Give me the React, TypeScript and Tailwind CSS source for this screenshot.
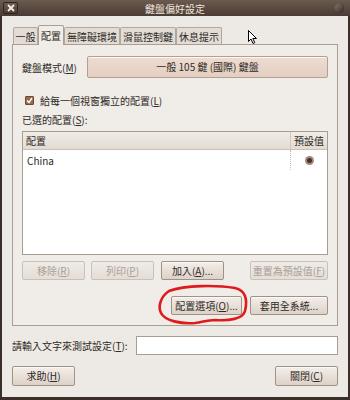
import React from 'react';

const font = { fontFamily: '"Noto Sans CJK TC", "Noto Sans", sans-serif' };

// 一般的 GTK 按鈕（Human 主題）
const Btn = ({
    children,
    disabled,
    className = '',
}: {
    children: React.ReactNode;
    disabled?: boolean;
    className?: string;
}) => (
    <div
        className={`flex items-center justify-center rounded-[2px] border text-[10px] leading-none ${
            disabled
                ? 'border-[#c9c0b6] bg-gradient-to-b from-[#efebe6] to-[#e4ddd6] text-[#a8a098]'
                : 'border-[#9f9286] bg-gradient-to-b from-[#f4eee9] to-[#ddd2c8] text-[#2e2a26] shadow-[inset_0_1px_0_#fbf8f5]'
        } ${className}`}
    >
        {children}
    </div>
);

const U = ({ children }: { children: React.ReactNode }) => <span className="underline">{children}</span>;

const tabs = [
    { label: '一般', w: 'w-[25px]' },
    { label: '配置', w: 'w-[26px]' },
    { label: '無障礙環境', w: 'w-[56px]' },
    { label: '滑鼠控制鍵', w: 'w-[56px]' },
    { label: '休息提示', w: 'w-[46px]' },
];

export default function App() {
    return (
        <div style={font} className="relative flex h-[400px] w-[350px] flex-col overflow-hidden bg-[#3b2f29]">
            {/* 標題列 */}
            <div className="relative flex h-[16px] items-center justify-center bg-gradient-to-b from-[#6b5a4f] to-[#4a3c34] text-[10px] text-[#efe6de]">
                <div className="absolute left-[3px] top-[2px] flex h-[12px] w-[15px] items-center justify-center rounded-[2px] border border-[#2e241f] bg-gradient-to-b from-[#6e5d53] to-[#4c3e36]">
                    <svg width="8" height="8" viewBox="0 0 8 8">
                        <path d="M1 1 L7 7 M7 1 L1 7" stroke="#f3ebe4" strokeWidth="1.8" />
                    </svg>
                </div>
                鍵盤偏好設定
                <div className="absolute right-[6px] top-[3px] h-[10px] w-[10px] rounded-full bg-gradient-to-br from-[#8a7a70] to-[#3a2e28] shadow-[inset_0_0_1px_#2a201b]" />
            </div>

            {/* 視窗內容 */}
            <div className="mx-[2px] mb-[3px] flex flex-1 flex-col bg-[#ede9e4] px-[10px] pt-[10px]">
                {/* 分頁標籤 */}
                <div className="flex h-[18px] items-end pl-[1px]">
                    {tabs.map((t, i) =>
                        i === 1 ? (
                            <div
                                key={t.label}
                                className={`relative z-10 -mb-px flex h-[20px] items-center justify-center rounded-t-[2px] border border-b-0 border-[#aa9e93] bg-[#f0ece8] text-[10px] text-[#2e2a26] ${t.w}`}
                            >
                                {t.label}
                            </div>
                        ) : (
                            <div
                                key={t.label}
                                className={`flex h-[17px] items-center justify-center rounded-t-[2px] border border-b-0 border-[#b3a89d] bg-[#e2dcd5] text-[10px] text-[#2e2a26] ${t.w}`}
                            >
                                {t.label}
                            </div>
                        )
                    )}
                </div>

                {/* 分頁面板 */}
                <div className="flex h-[282px] flex-col border border-[#aa9e93] bg-[#f0ece8] px-[9px] pt-[11px]">
                    <div className="flex items-center">
                        <span className="w-[65px] text-[10px] text-[#2e2a26]">
                            鍵盤模式(<U>M</U>)
                        </span>
                        <Btn className="h-[22px] flex-1 !border-[#b49f90] !from-[#eddcd1] !to-[#e3cfc2]">
                            一般 105 鍵 (國際) 鍵盤
                        </Btn>
                    </div>

                    <div className="mt-[15px] flex items-center gap-[6px] pl-[3px]">
                        <div className="flex h-[9px] w-[9px] items-center justify-center rounded-[1px] border border-[#6d4a34] bg-[#9a6a4c]">
                            <svg width="7" height="7" viewBox="0 0 7 7">
                                <path d="M1 3.5 L3 5.5 L6 1" stroke="#fff" strokeWidth="1.4" fill="none" />
                            </svg>
                        </div>
                        <span className="text-[10px] text-[#2e2a26]">
                            給每一個視窗獨立的配置(<U>L</U>)
                        </span>
                    </div>

                    <div className="mt-[4px] text-[10px] text-[#2e2a26]">
                        已選的配置(<U>S</U>):
                    </div>

                    {/* 配置清單 */}
                    <div className="mt-[4px] flex h-[124px] flex-col border border-[#a99d92] bg-white">
                        <div className="flex h-[18px] border-b border-[#c9bfb5] bg-gradient-to-b from-[#f1ece7] to-[#e3dcd4] text-[10px] text-[#2e2a26]">
                            <div className="flex flex-1 items-center pl-[3px]">配置</div>
                            <div className="flex w-[37px] items-center justify-center border-l border-[#cfc6bc]">預設值</div>
                        </div>
                        <div className="flex h-[20px] text-[10px] text-[#2e2a26]">
                            <div className="flex flex-1 items-center pl-[4px]">China</div>
                            <div className="flex w-[37px] items-center justify-center border-l border-dotted border-[#c8c0b8]">
                                <div className="flex h-[9px] w-[9px] items-center justify-center rounded-full bg-[#a38a7c]">
                                    <div className="h-[5px] w-[5px] rounded-full bg-[#4a3128]" />
                                </div>
                            </div>
                        </div>
                    </div>

                    <div className="mt-[6px] flex">
                        <Btn disabled className="h-[19px] w-[63px]">
                            移除(<U>R</U>)
                        </Btn>
                        <Btn disabled className="ml-[6px] h-[19px] w-[63px]">
                            列印(<U>P</U>)
                        </Btn>
                        <Btn className="ml-[7px] h-[19px] w-[63px]">
                            加入(<U>A</U>)...
                        </Btn>
                        <Btn disabled className="ml-auto h-[19px] w-[78px]">
                            重置為預設值(<U>F</U>)
                        </Btn>
                    </div>

                    <div className="mt-[16px] flex justify-end gap-[8px]">
                        <Btn className="h-[19px] w-[71px]">
                            配置選項(<U>O</U>)...
                        </Btn>
                        <Btn className="h-[19px] w-[78px]">套用全系統...</Btn>
                    </div>
                </div>

                {/* 測試輸入 */}
                <div className="mt-[10px] flex items-center">
                    <span className="w-[124px] text-[10px] text-[#2e2a26]">
                        請輸入文字來測試設定(<U>T</U>):
                    </span>
                    <div className="h-[19px] flex-1 border border-[#a99d92] bg-white" />
                </div>

                <div className="mt-[11px] flex justify-between">
                    <Btn className="h-[20px] w-[63px]">
                        求助(<U>H</U>)
                    </Btn>
                    <Btn className="h-[20px] w-[63px]">
                        關閉(<U>C</U>)
                    </Btn>
                </div>
            </div>

            {/* 手畫紅圈 */}
            <svg className="pointer-events-none absolute left-[155px] top-[283px]" width="96" height="44" viewBox="0 0 96 44">
                <path
                    d="M14 8 C30 2 62 2 80 5 C90 7 93 16 90 28 C88 36 74 38 60 37 C52 37 48 39 40 40 C26 41 10 38 6 30 C3 24 5 14 14 8 Z"
                    stroke="#e01a1a"
                    strokeWidth="2.6"
                    fill="none"
                    strokeLinecap="round"
                />
            </svg>

            {/* 滑鼠游標 */}
            <svg className="pointer-events-none absolute left-[248px] top-[30px]" width="10" height="15" viewBox="0 0 10 15">
                <path d="M0.5 0.5 L0.5 11.5 L3 9 L5 13.5 L6.8 12.7 L4.8 8.5 L8.5 8.5 Z" fill="#fff" stroke="#000" strokeWidth="1" />
            </svg>
        </div>
    );
}
